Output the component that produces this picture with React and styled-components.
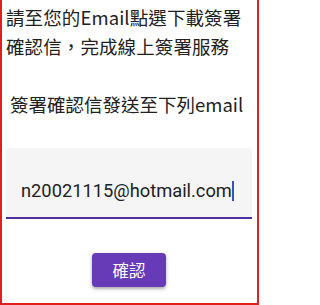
import React from 'react';
import styled, { createGlobalStyle } from 'styled-components';

const GlobalStyle = createGlobalStyle`
  html, body {
    margin: 0;
    padding: 0;
    background: #ffffff;
  }
  body {
    font-family: 'Noto Sans CJK TC', 'Noto Sans', sans-serif;
    color: #212121;
  }
`;

const Frame = styled.div`
  box-sizing: border-box;
  width: 259px;
  height: 305px;
  border: 2px solid #e0201c;
  border-top: none;
  padding: 3px 6px 0 4px;
  display: flex;
  flex-direction: column;
`;

const Notice = styled.p`
  margin: 0;
  font-size: 18.5px;
  line-height: 29px;
  letter-spacing: 0.1px;
`;

const Hint = styled.p`
  margin: 29px 0 0;
  padding-left: ${(p) => p.$indent || 0}px;
  font-size: 18.5px;
  line-height: 29px;
`;

const Field = styled.div`
  box-sizing: border-box;
  margin-top: 29px;
  width: 246px;
  height: 71px;
  background: #f5f5f5;
  border-radius: 4px 4px 0 0;
  border-bottom: 2px solid #4f2fa0;
  padding: 0 0 14px 15px;
  display: flex;
  align-items: flex-end;
`;

const FieldText = styled.span`
  font-family: Roboto, 'Noto Sans', sans-serif;
  font-size: 18.3px;
  line-height: 24px;
  color: #212121;
`;

const Caret = styled.span`
  display: inline-block;
  width: 2px;
  height: 20px;
  margin-bottom: 2px;
  background: #3f51b5;
`;

const Actions = styled.div`
  width: 246px;
  display: flex;
  justify-content: center;
  margin-top: 34px;
`;

const ConfirmButton = styled.button`
  box-sizing: border-box;
  width: 74px;
  height: 34px;
  border: none;
  border-radius: 4px;
  background: #673ab7;
  color: #ffffff;
  font-family: 'Noto Sans CJK TC', sans-serif;
  font-size: 16.5px;
  box-shadow: 0 2px 3px rgba(0, 0, 0, 0.25), 0 1px 5px rgba(0, 0, 0, 0.12);
  cursor: pointer;
`;

export default function App() {
  return (
    <>
      <GlobalStyle />
      <Frame>
        <Notice>請至您的Email點選下載簽署確認信，完成線上簽署服務</Notice>
        <Hint $indent={4}>簽署確認信發送至下列email</Hint>
        <Field>
          <FieldText>n20021115@hotmail.com</FieldText>
          <Caret />
        </Field>
        <Actions>
          <ConfirmButton>確認</ConfirmButton>
        </Actions>
      </Frame>
    </>
  );
}
